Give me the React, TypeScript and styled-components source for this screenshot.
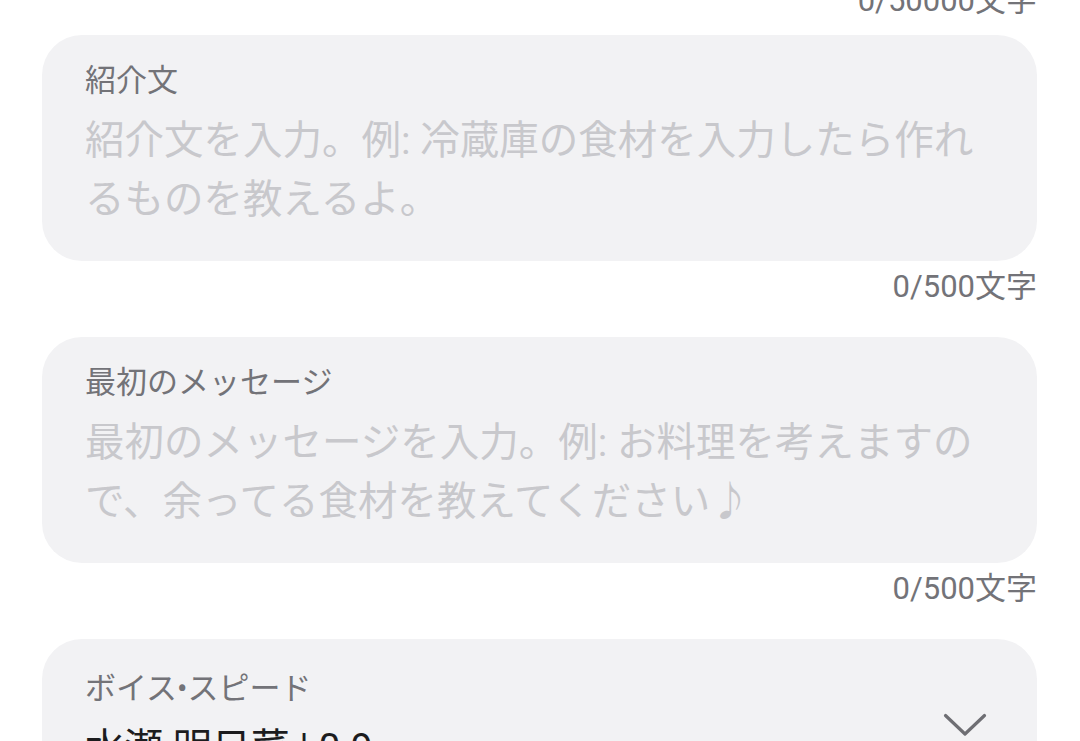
import React from "react";
import styled, { createGlobalStyle } from "styled-components";

const Global = createGlobalStyle`
  html, body { margin: 0; padding: 0; background: #ffffff; }
  body { font-family: Roboto, "Noto Sans CJK JP", "Noto Sans", sans-serif; overflow: hidden; }
`;

const Page = styled.div`
  display: flex;
  flex-direction: column;
  padding: 0 43px 0 42px;
  margin-top: -25px;
`;

const Counter = styled.div<{ $after?: number }>`
  font-size: 31px;
  line-height: 44px;
  color: #737378;
  text-align: right;
  margin: 4px 0 ${(p) => p.$after ?? 28}px;
`;

const Card = styled.div<{ $top?: number }>`
  background: #f2f2f4;
  border-radius: 40px;
  padding: ${(p) => p.$top ?? 24}px 43px 32px;
  display: flex;
  flex-direction: column;
`;

const Label = styled.div`
  font-size: 31px;
  line-height: 44px;
  color: #737378;
`;

const Placeholder = styled.div`
  margin-top: 8px;
  font-size: 39.5px;
  line-height: 59px;
  color: #c8c8cc;
`;

const SelectRow = styled.div`
  display: flex;
  align-items: flex-start;
  justify-content: space-between;
`;

const SelectText = styled.div`
  display: flex;
  flex-direction: column;
`;

const Value = styled.div`
  margin-top: 9px;
  font-size: 39px;
  line-height: 56px;
  color: #1c1c1e;
`;

const ChevronBox = styled.div`
  margin: 46px 7px 0 0;
  display: flex;
`;

const Chevron = () => (
  <ChevronBox>
    <svg width="44" height="24" viewBox="0 0 44 24" fill="none">
      <path d="M2.5 2.5 L22 21 L41.5 2.5" stroke="#6e6e73" strokeWidth="3.2" strokeLinecap="round" strokeLinejoin="round" />
    </svg>
  </ChevronBox>
);

export default function App() {
  return (
    <>
      <Global />
      <Page>
        <Counter $after={12}>0/50000文字</Counter>
        <Card>
          <Label>紹介文</Label>
          <Placeholder>紹介文を入力。例: 冷蔵庫の食材を入力したら作れるものを教えるよ。</Placeholder>
        </Card>
        <Counter>0/500文字</Counter>
        <Card>
          <Label>最初のメッセージ</Label>
          <Placeholder>最初のメッセージを入力。例: お料理を考えますので、余ってる食材を教えてください♪</Placeholder>
        </Card>
        <Counter>0/500文字</Counter>
        <Card $top={28}>
          <SelectRow>
            <SelectText>
              <Label>ボイス•スピード</Label>
              <Value>水瀬 明日菜 | 0.9</Value>
            </SelectText>
            <Chevron />
          </SelectRow>
        </Card>
      </Page>
    </>
  );
}
